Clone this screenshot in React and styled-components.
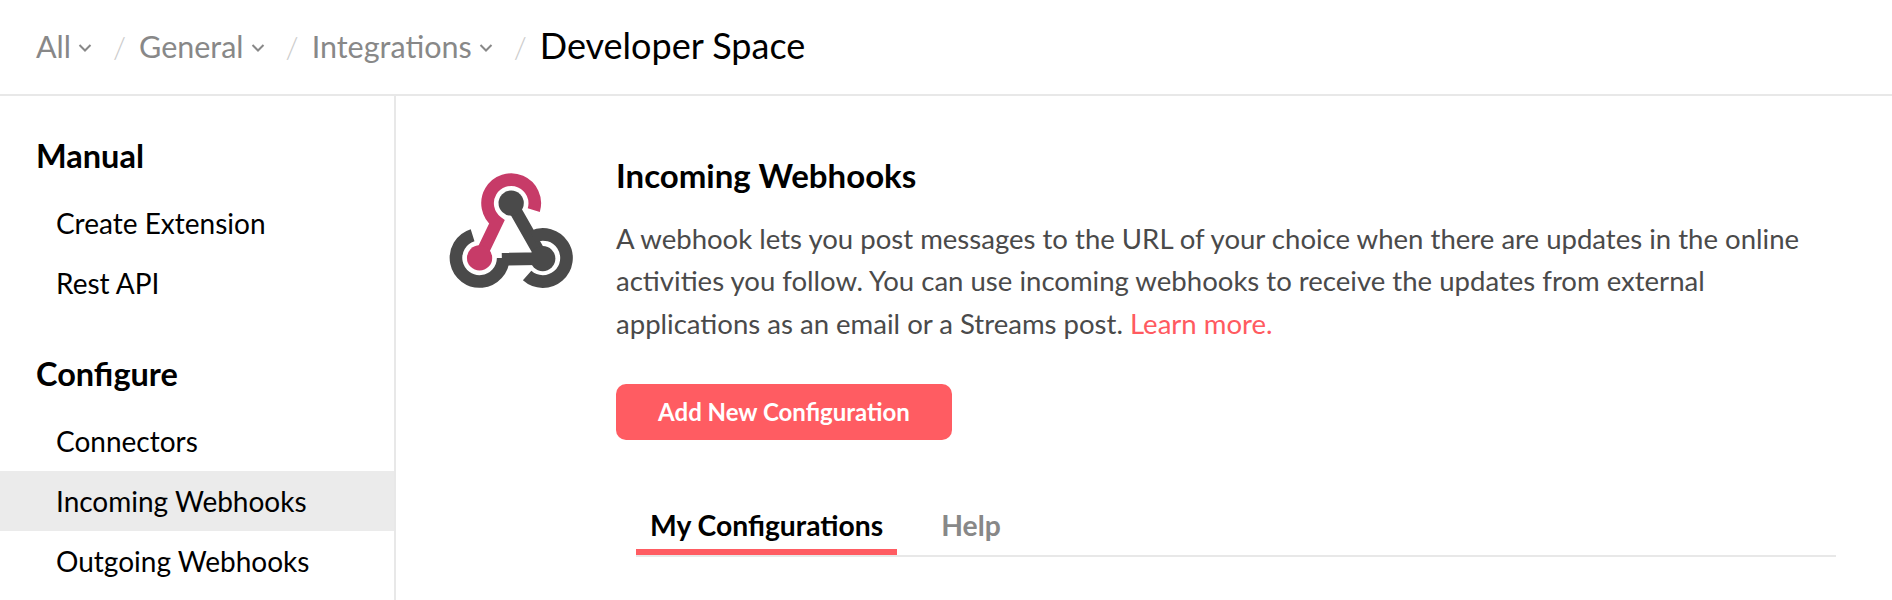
import React from "react";
import styled, { createGlobalStyle } from "styled-components";

const crumbs = ["All", "General", "Integrations"];
const sections = [
  { title: "Manual", items: ["Create Extension", "Rest API"] },
  { title: "Configure", items: ["Connectors", "Incoming Webhooks", "Outgoing Webhooks"] },
];

function Chevron() {
  return (
    <ChevronIcon viewBox="0 0 14 10">
      <path d="M1.5 2 L7 7.5 L12.5 2" fill="none" stroke="#888" strokeWidth="2" />
    </ChevronIcon>
  );
}

function WebhookLogo() {
  return (
    <LogoSvg viewBox="80 70 385 345">
      <g fill="none" stroke="#4a4a4a" strokeWidth="38">
        <path d="M273 160 L368 327 L245 329" />
        <path d="M157 257 A71 71 0 1 0 249 325" />
        <path d="M338 261 A71 71 0 1 1 321 378" />
      </g>
      <circle cx="273" cy="160" r="38" fill="#4a4a4a" />
      <circle cx="368" cy="327" r="38" fill="#4a4a4a" />
      <path
        d="M341 181 A71 71 0 1 0 230 217 L178 325"
        fill="none"
        stroke="#c73b68"
        strokeWidth="38"
      />
      <circle cx="178" cy="325" r="38" fill="#c73b68" />
    </LogoSvg>
  );
}

export default function App() {
  return (
    <Page>
      <GlobalStyle />
      <Header>
        {crumbs.map((c) => (
          <React.Fragment key={c}>
            <Crumb>
              {c}
              <Chevron />
            </Crumb>
            <Slash>/</Slash>
          </React.Fragment>
        ))}
        <PageTitle>Developer Space</PageTitle>
      </Header>
      <Body>
        <Sidebar>
          {sections.map((s) => (
            <Section key={s.title}>
              <SectionTitle>{s.title}</SectionTitle>
              {s.items.map((item) => (
                <NavItem key={item} $active={item === "Incoming Webhooks"}>
                  {item}
                </NavItem>
              ))}
            </Section>
          ))}
        </Sidebar>
        <Main>
          <LogoCol>
            <WebhookLogo />
          </LogoCol>
          <Content>
            <Heading>Incoming Webhooks</Heading>
            <Description>
              A webhook lets you post messages to the URL of your choice when there are updates in
              the online activities you follow. You can use incoming webhooks to receive the updates
              from external applications as an email or a Streams post.{" "}
              <LearnMore>Learn more.</LearnMore>
            </Description>
            <AddButton>Add New Configuration</AddButton>
            <Tabs>
              <Tab $active>My Configurations</Tab>
              <Tab>Help</Tab>
            </Tabs>
          </Content>
        </Main>
      </Body>
    </Page>
  );
}

const GlobalStyle = createGlobalStyle`
  body {
    margin: 0;
    background: #fff;
    font-family: Lato, "Liberation Sans", sans-serif;
  }
`;

const Page = styled.div`
  height: 600px;
  overflow: hidden;
  display: flex;
  flex-direction: column;
`;

const Header = styled.header`
  height: 92px;
  padding-bottom: 2px;
  flex: none;
  display: flex;
  align-items: center;
  padding-left: 36px;
  border-bottom: 2px solid #e8e8e8;
`;

const Crumb = styled.span`
  display: flex;
  align-items: center;
  gap: 7px;
  font-size: 30.5px;
  color: #888;
`;

const ChevronIcon = styled.svg`
  width: 14px;
  height: 10px;
  margin-top: 4px;
`;

const Slash = styled.span`
  margin: 0 13px 0 21px;
  font-size: 30px;
  font-weight: 300;
  color: #ccc;
`;

const PageTitle = styled.span`
  font-size: 36px;
  color: #000;
  margin-bottom: 3px;
`;

const Body = styled.div`
  flex: 1;
  display: flex;
  min-height: 0;
`;

const Sidebar = styled.nav`
  width: 394px;
  flex: none;
  border-right: 2px solid #e8e8e8;
  padding-top: 42px;
`;

const Section = styled.section`
  margin-bottom: 43px;
`;

const SectionTitle = styled.h3`
  margin: 0 0 19px;
  padding-left: 36px;
  font-size: 32.5px;
  line-height: 36px;
  font-weight: 700;
  color: #000;
`;

const NavItem = styled.div`
  height: 60px;
  display: flex;
  align-items: center;
  padding-left: 56px;
  font-size: 28px;
  color: #000;
  background: ${(p) => (p.$active ? "#ebebeb" : "transparent")};
`;

const Main = styled.main`
  flex: 1;
  display: flex;
  min-width: 0;
`;

const LogoCol = styled.div`
  width: 220px;
  flex: none;
  padding: 77px 0 0 51px;
  box-sizing: border-box;
`;

const LogoSvg = styled.svg`
  display: block;
  width: 128px;
  height: 115px;
`;

const Content = styled.div`
  width: 1220px;
  padding-top: 61px;
`;

const Heading = styled.h2`
  margin: 0 0 25px;
  font-size: 33px;
  line-height: 36px;
  font-weight: 700;
  color: #000;
`;

const Description = styled.p`
  margin: 0;
  width: 1200px;
  font-size: 27.55px;
  line-height: 42.3px;
  color: #4a4a4a;
`;

const LearnMore = styled.a`
  color: #ff5a60;
`;

const AddButton = styled.button`
  display: block;
  margin-top: 39px;
  width: 336px;
  height: 56px;
  border: 0;
  border-radius: 10px;
  background: #ff5c62;
  color: #fff;
  font-family: inherit;
  font-size: 24px;
  font-weight: 700;
`;

const Tabs = styled.div`
  margin-top: 68px;
  margin-left: 20px;
  display: flex;
  border-bottom: 2px solid #e8e8e8;
`;

const Tab = styled.div`
  padding: 0 14px 7px;
  margin-right: 30px;
  font-size: 28.3px;
  font-weight: 700;
  line-height: 34px;
  color: ${(p) => (p.$active ? "#000" : "#888")};
  border-bottom: 6px solid ${(p) => (p.$active ? "#ff5c62" : "transparent")};
`;
